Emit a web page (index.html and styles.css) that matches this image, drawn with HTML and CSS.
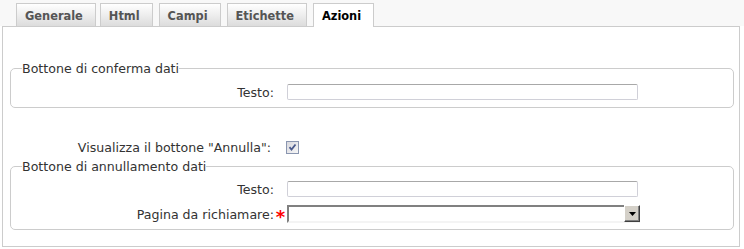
FILE: index.html
```html
<!DOCTYPE html>
<html lang="it">
<head>
    <meta charset="UTF-8">
    <title>Azioni</title>
    <link rel="stylesheet" href="styles.css">
</head>
<body>
    <div class="tabs">
        <div class="tab">Generale</div>
        <div class="tab">Html</div>
        <div class="tab">Campi</div>
        <div class="tab">Etichette</div>
        <div class="tab active">Azioni</div>
    </div>

    <div class="panel">
        <fieldset class="group group-confirm">
            <legend>Bottone di conferma dati</legend>
            <div class="row">
                <label class="row-label">Testo:</label>
                <span class="req"></span>
                <input type="text" class="text-input">
            </div>
        </fieldset>

        <div class="row row-check">
            <label class="row-label">Visualizza il bottone "Annulla":</label>
            <span class="checkbox">
                <svg width="11" height="11" viewBox="0 0 11 11"><path d="M2.5 5.2 L4.5 7.5 L8.5 2.5" fill="none" stroke="#4a5a8c" stroke-width="1.8"/></svg>
            </span>
        </div>

        <fieldset class="group group-cancel">
            <legend>Bottone di annullamento dati</legend>
            <div class="row">
                <label class="row-label">Testo:</label>
                <span class="req"></span>
                <input type="text" class="text-input">
            </div>
            <div class="row row-select">
                <label class="row-label">Pagina da richiamare:</label>
                <span class="req">*</span>
                <div class="select-box">
                    <span class="select-value"></span>
                    <span class="select-btn">
                        <svg width="7" height="4" viewBox="0 0 7 4"><path d="M0 0 H7 L3.5 4 Z" fill="#000"/></svg>
                    </span>
                </div>
            </div>
        </fieldset>
    </div>
</body>
</html>
```

FILE: styles.css
```css
* {
    box-sizing: border-box;
}

body {
    margin: 0;
    background: #fff;
    color: #333;
    font-family: "DejaVu Sans", Verdana, sans-serif;
    font-size: 12.6px;
}

.tabs {
    display: flex;
    align-items: flex-end;
    height: 26px;
    padding-left: 16px;
    background: #f8f8f8;
}

.tab {
    height: 23px;
    padding: 2px 12px 0 8px;
    margin-right: 6px;
    line-height: 21px;
    font-size: 11.4px;
    font-weight: bold;
    color: #555;
    border: 1px solid #ccc;
    border-bottom: none;
    background: linear-gradient(#ffffff, #dcdcdc);
}

.tab:first-child { margin-right: 4px; }

.tab.active {
    position: relative;
    z-index: 1;
    height: 24px;
    margin-bottom: -1px;
    color: #000;
    background: #fff;
}

.panel {
    margin: 0 4px 0 2px;
    height: 221px;
    border: 1px solid #ccc;
    background: #fff;
}

.group {
    margin: 0 5px 0 7px;
    padding: 6px 0 5px 0;
    border: 1px solid #ccc;
    border-radius: 5px;
    min-width: 0;
}

.group legend {
    padding: 0;
    margin-left: 11px;
    line-height: 15px;
}

.group-confirm { margin-top: 34px; }
.group-cancel { margin-top: 2px; padding: 5px 0 4px 0; }

.row {
    display: flex;
    align-items: center;
    height: 20px;
    line-height: 15px;
}

.row-label {
    width: 263px;
    text-align: right;
}

.req {
    width: 13px;
    color: #f00;
    font-weight: bold;
    font-size: 18px;
    line-height: 15px;
    text-align: center;
    padding-top: 5px;
}

.text-input {
    width: 351px;
    height: 16px;
    margin: 0;
    padding: 0 2px;
    border: 1px solid #d0d0d8;
    border-top-color: #a8a8a8;
    border-radius: 2px;
    background: #fff;
    outline: none;
}

.row-check {
    margin-top: 29px;
}

.row-check .row-label {
    width: 268px;
}

.checkbox {
    display: flex;
    align-items: center;
    justify-content: center;
    width: 13px;
    height: 13px;
    margin-left: 15px;
    border: 1px solid #8a96b0;
    background: linear-gradient(135deg, #d8d8de, #f6f6f6);
}

.row-select {
    height: 22px;
    margin-top: 4px;
}

.select-box {
    display: flex;
    width: 353px;
    height: 18px;
    border: 2px solid #808080;
    border-right-color: #e8e8e8;
    border-bottom-color: #f4f4f4;
    background: #fff;
}

.select-value {
    flex: 1;
}

.select-btn {
    display: flex;
    align-items: center;
    justify-content: center;
    width: 16px;
    margin: -2px -2px -1px 0;
    background: #d4d0c8;
    border: 1px solid #404040;
    border-top-color: #fff;
    border-left-color: #fff;
    box-shadow: inset -1px -1px 0 #808080;
}
```
